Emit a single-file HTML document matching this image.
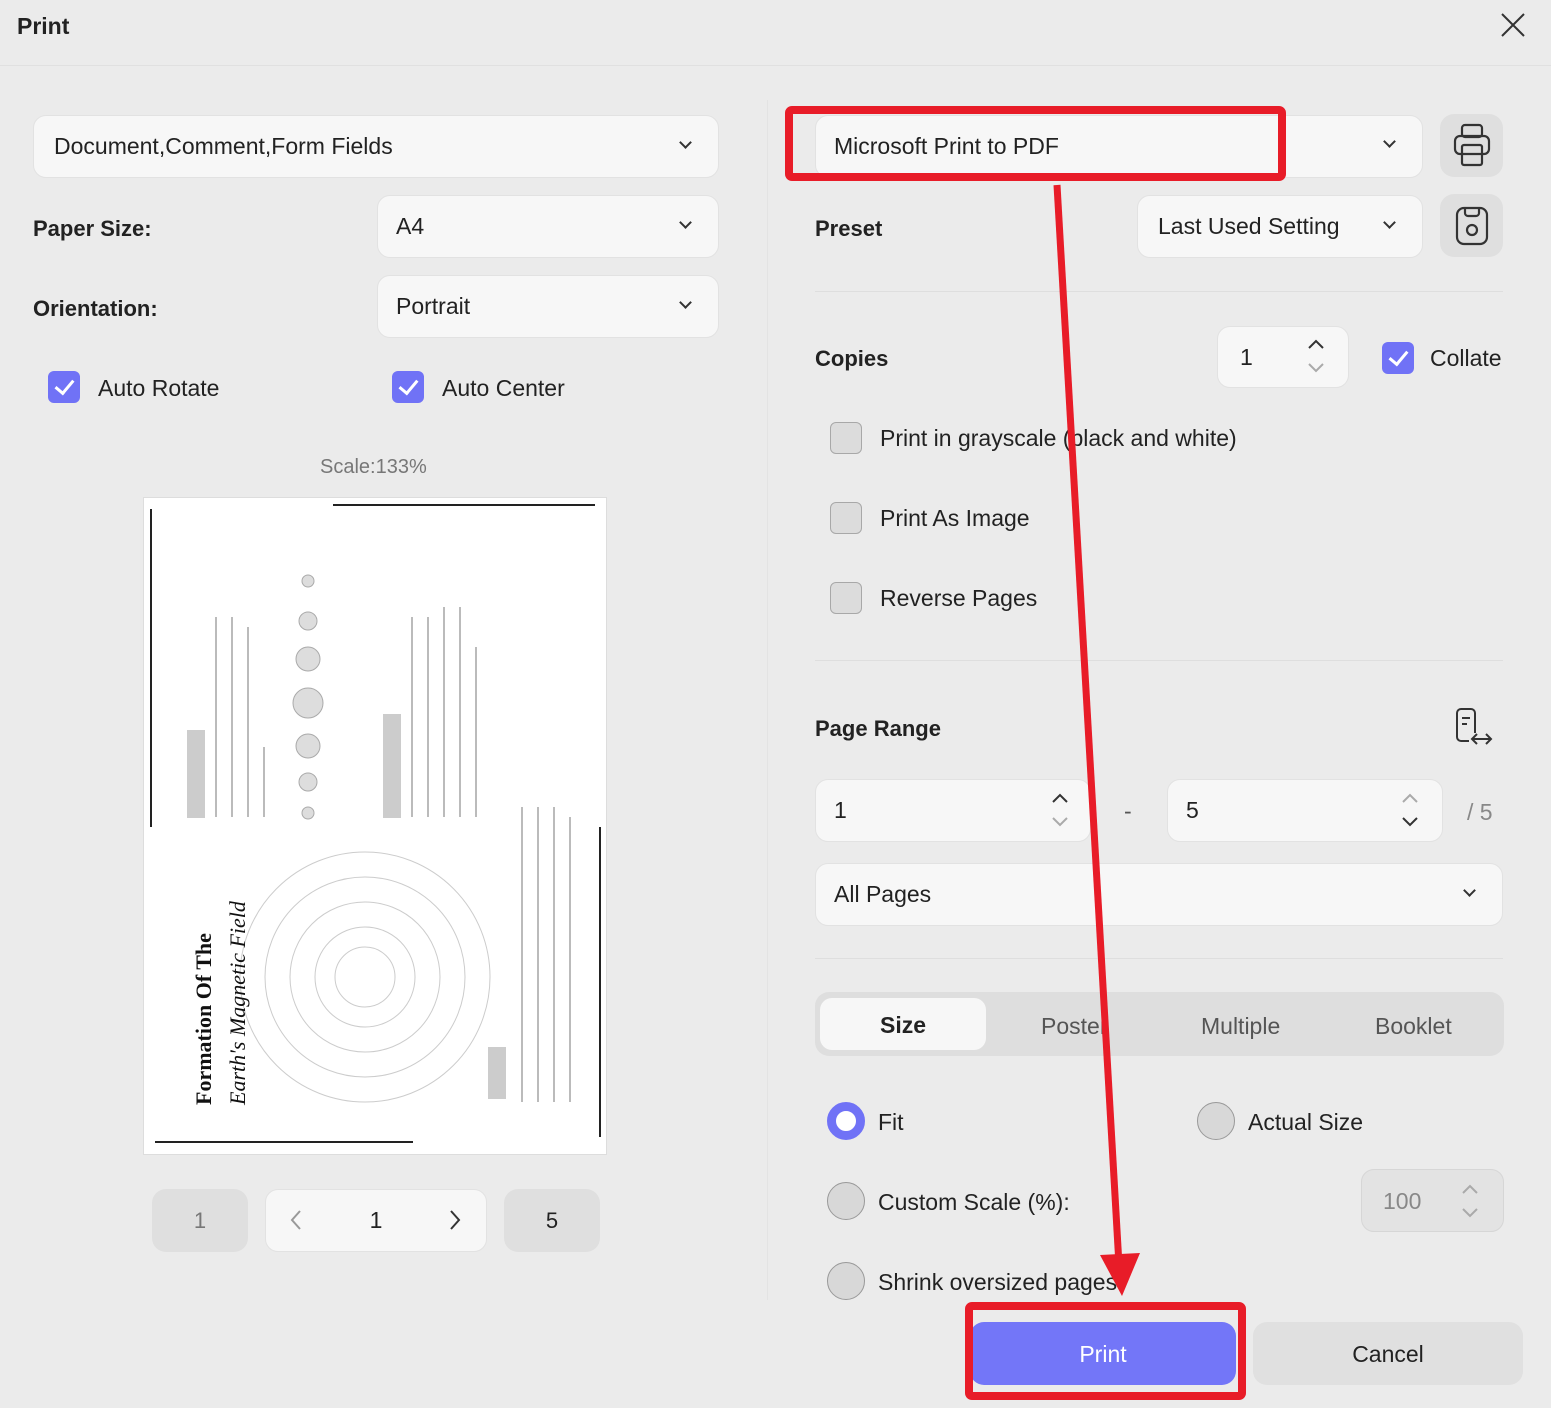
<!DOCTYPE html>
<html><head><meta charset="utf-8"><style>
*{box-sizing:border-box;margin:0;padding:0}
body{width:1551px;height:1408px;background:#ebebeb;font-family:"Liberation Sans",sans-serif;color:#222;position:relative;overflow:hidden}
.a{position:absolute}
.f{position:absolute;background:#f7f7f7;border:1.5px solid #e2e2e2;border-radius:13px;font-size:23px;display:flex;align-items:center;padding-left:18px}
.lbl{position:absolute;font-size:22px;font-weight:bold;color:#222}
.t{position:absolute;font-size:23px;color:#222}
.chev{position:absolute;width:9px;height:9px;border-right:2px solid #333;border-bottom:2px solid #333;transform:rotate(45deg)}
.cb{position:absolute;width:32px;height:32px;border-radius:6px;background:#7072f6}
.cb:after{content:"";position:absolute;left:11px;top:5px;width:8px;height:15px;border-right:3px solid #fff;border-bottom:3px solid #fff;transform:rotate(40deg)}
.uc{position:absolute;width:32px;height:32px;border-radius:6px;background:#dcdcdc;border:1.5px solid #a8a8a8}
.rd{position:absolute;width:38px;height:38px;border-radius:50%;background:#d8d8d8;border:1.5px solid #999}
.hl{position:absolute;height:1px;background:#dedede}
.ib{position:absolute;background:#dfdfdf;border-radius:14px}
</style></head><body>
<div class="a" style="left:17px;top:13px;font-size:23px;font-weight:bold">Print</div>
<svg class="a" style="left:1500px;top:12px" width="26" height="26"><path d="M2 2L24 24M24 2L2 24" stroke="#333" stroke-width="2"/></svg>
<div class="hl" style="left:0;top:65px;width:1551px;background:#e0e0e0"></div>
<div class="a" style="left:767px;top:100px;width:1px;height:1200px;background:#e3e3e3"></div>

<div class="f" style="left:33px;top:115px;width:686px;height:63px;padding-left:20px">Document,Comment,Form Fields</div><div class="chev" style="left:681px;top:138px"></div>
<div class="lbl" style="left:33px;top:216px">Paper Size:</div>
<div class="f" style="left:377px;top:195px;width:342px;height:63px">A4</div><div class="chev" style="left:681px;top:218px"></div>
<div class="lbl" style="left:33px;top:296px">Orientation:</div>
<div class="f" style="left:377px;top:275px;width:342px;height:63px">Portrait</div><div class="chev" style="left:681px;top:298px"></div>
<div class="cb" style="left:48px;top:371px"></div><div class="t" style="left:98px;top:375px">Auto Rotate</div>
<div class="cb" style="left:392px;top:371px"></div><div class="t" style="left:442px;top:375px">Auto Center</div>
<div class="a" style="left:320px;top:456px;font-size:20px;color:#777">Scale:133%</div>

<svg class="a" style="left:143px;top:497px" width="465" height="659">
<rect x="0.5" y="0.5" width="463" height="657" fill="#fff" stroke="#ddd"/>
<line x1="8" y1="12" x2="8" y2="330" stroke="#222" stroke-width="2"/>
<line x1="190" y1="8" x2="452" y2="8" stroke="#222" stroke-width="2"/>
<line x1="12" y1="645" x2="270" y2="645" stroke="#222" stroke-width="2"/>
<line x1="457" y1="330" x2="457" y2="640" stroke="#222" stroke-width="2"/>
<g fill="#ddd" stroke="#aaa"><circle cx="165" cy="84" r="6"/><circle cx="165" cy="124" r="9"/><circle cx="165" cy="162" r="12"/><circle cx="165" cy="206" r="15"/><circle cx="165" cy="249" r="12"/><circle cx="165" cy="285" r="9"/><circle cx="165" cy="316" r="6"/></g>
<rect x="44" y="233" width="18" height="88" fill="#ccc"/><rect x="240" y="217" width="18" height="104" fill="#ccc"/><rect x="345" y="550" width="18" height="52" fill="#ccc"/>
<g stroke="#ccc" fill="none"><circle cx="222" cy="480" r="30"/><circle cx="222" cy="480" r="50"/><circle cx="222" cy="480" r="75"/><circle cx="222" cy="480" r="100"/><circle cx="222" cy="480" r="125"/></g>
<g fill="#bbb"><rect x="72" y="120" width="2" height="200"/><rect x="88" y="120" width="2" height="200"/><rect x="104" y="130" width="2" height="190"/><rect x="120" y="250" width="2" height="70"/><rect x="268" y="120" width="2" height="200"/><rect x="284" y="120" width="2" height="200"/><rect x="300" y="110" width="2" height="210"/><rect x="316" y="110" width="2" height="210"/><rect x="332" y="150" width="2" height="170"/><rect x="378" y="310" width="2" height="295"/><rect x="394" y="310" width="2" height="295"/><rect x="410" y="310" width="2" height="295"/><rect x="426" y="320" width="2" height="285"/></g>
<text transform="translate(68,608) rotate(-90)" font-family="Liberation Serif" font-weight="bold" font-size="22" fill="#111">Formation Of The</text>
<text transform="translate(102,608) rotate(-90)" font-family="Liberation Serif" font-style="italic" font-size="22" fill="#111">Earth's Magnetic Field</text>
</svg>

<div class="ib" style="left:152px;top:1189px;width:96px;height:63px;font-size:22px;color:#777;text-align:center;line-height:63px">1</div>
<div class="f" style="left:265px;top:1189px;width:222px;height:63px;padding:0;justify-content:center">1</div>
<svg class="a" style="left:288px;top:1208px" width="180" height="24"><path d="M12 3L4 12L12 21" stroke="#999" stroke-width="2" fill="none"/><path d="M163 3L171 12L163 21" stroke="#333" stroke-width="2" fill="none"/></svg>
<div class="ib" style="left:504px;top:1189px;width:96px;height:63px;font-size:22px;text-align:center;line-height:63px">5</div>

<div class="f" style="left:815px;top:115px;width:608px;height:63px">Microsoft Print to PDF</div><div class="chev" style="left:1385px;top:137px"></div>
<div class="ib" style="left:1440px;top:114px;width:63px;height:63px"></div>
<svg class="a" style="left:1453px;top:123px" width="38" height="44" fill="none" stroke="#333" stroke-width="2.2"><rect x="9" y="2" width="20" height="12" rx="3"/><rect x="2" y="13" width="34" height="18" rx="5"/><rect x="9" y="22" width="20" height="20" rx="2"/></svg>
<div class="lbl" style="left:815px;top:216px">Preset</div>
<div class="f" style="left:1137px;top:195px;width:286px;height:63px;padding-left:20px">Last Used Setting</div><div class="chev" style="left:1385px;top:218px"></div>
<div class="ib" style="left:1440px;top:194px;width:63px;height:63px"></div>
<svg class="a" style="left:1454px;top:206px" width="36" height="40" fill="none" stroke="#333" stroke-width="2.2"><rect x="3" y="2" width="30" height="36" rx="7"/><path d="M11 2v5a3 3 0 0 0 3 3h8a3 3 0 0 0 3-3V2"/><circle cx="18" cy="24" r="5"/></svg>
<div class="hl" style="left:815px;top:291px;width:688px"></div>

<div class="lbl" style="left:815px;top:346px">Copies</div>
<div class="f" style="left:1217px;top:326px;width:132px;height:62px;padding-left:22px">1</div>
<svg class="a" style="left:1306px;top:338px" width="20" height="36" fill="none" stroke-width="2"><path d="M3 10L10 3L17 10" stroke="#333"/><path d="M3 26L10 33L17 26" stroke="#aaa"/></svg>
<div class="cb" style="left:1382px;top:342px"></div><div class="t" style="left:1430px;top:345px">Collate</div>
<div class="uc" style="left:830px;top:422px"></div><div class="t" style="left:880px;top:425px">Print in grayscale (black and white)</div>
<div class="uc" style="left:830px;top:502px"></div><div class="t" style="left:880px;top:505px">Print As Image</div>
<div class="uc" style="left:830px;top:582px"></div><div class="t" style="left:880px;top:585px">Reverse Pages</div>
<div class="hl" style="left:815px;top:660px;width:688px"></div>

<div class="lbl" style="left:815px;top:716px">Page Range</div>
<svg class="a" style="left:1455px;top:707px" width="38" height="40" fill="none" stroke="#333" stroke-width="2"><path d="M20 26V6a4 4 0 0 0-4-4H6a4 4 0 0 0-4 4v24a4 4 0 0 0 4 4h8"/><path d="M7 11h8M7 17h5"/><path d="M18 32h17M22 27l-5 5 5 5M31 27l5 5-5 5"/></svg>
<div class="f" style="left:815px;top:779px;width:276px;height:63px">1</div>
<svg class="a" style="left:1050px;top:792px" width="20" height="36" fill="none" stroke-width="2"><path d="M3 10L10 3L17 10" stroke="#333"/><path d="M3 26L10 33L17 26" stroke="#aaa"/></svg>
<div class="t" style="left:1124px;top:798px;color:#555">-</div>
<div class="f" style="left:1167px;top:779px;width:276px;height:63px">5</div>
<svg class="a" style="left:1400px;top:792px" width="20" height="36" fill="none" stroke-width="2"><path d="M3 10L10 3L17 10" stroke="#aaa"/><path d="M3 26L10 33L17 26" stroke="#333"/></svg>
<div class="t" style="left:1467px;top:799px;color:#888">/ 5</div>
<div class="f" style="left:815px;top:863px;width:688px;height:63px">All Pages</div><div class="chev" style="left:1465px;top:886px"></div>
<div class="hl" style="left:815px;top:958px;width:688px"></div>

<div class="a" style="left:815px;top:992px;width:689px;height:64px;background:#dedede;border-radius:14px"></div>
<div class="a" style="left:820px;top:998px;width:166px;height:52px;background:#f7f7f7;border-radius:12px;font-size:23px;font-weight:bold;text-align:center;line-height:54px">Size</div>
<div class="t" style="left:1041px;top:1013px;color:#555">Poster</div>
<div class="t" style="left:1201px;top:1013px;color:#555">Multiple</div>
<div class="t" style="left:1375px;top:1013px;color:#555">Booklet</div>

<div class="a" style="left:827px;top:1102px;width:38px;height:38px;border-radius:50%;background:#fff;border:9px solid #7072f6"></div>
<div class="t" style="left:878px;top:1109px">Fit</div>
<div class="rd" style="left:1197px;top:1102px"></div><div class="t" style="left:1248px;top:1109px">Actual Size</div>
<div class="rd" style="left:827px;top:1182px"></div><div class="t" style="left:878px;top:1189px">Custom Scale (%):</div>
<div class="a" style="left:1361px;top:1169px;width:143px;height:63px;background:#e3e3e3;border:1.5px solid #d6d6d6;border-radius:13px;font-size:23px;color:#888;padding:18px 0 0 21px">100</div>
<svg class="a" style="left:1460px;top:1183px" width="20" height="36" fill="none" stroke="#aaa" stroke-width="2"><path d="M3 10L10 3L17 10"/><path d="M3 26L10 33L17 26"/></svg>
<div class="rd" style="left:827px;top:1262px"></div><div class="t" style="left:878px;top:1269px">Shrink oversized pages</div>

<div class="a" style="left:970px;top:1322px;width:266px;height:63px;background:#7376f8;border-radius:14px;color:#fff;font-size:23px;text-align:center;line-height:65px">Print</div>
<div class="a" style="left:1253px;top:1322px;width:270px;height:63px;background:#e0e0e0;border-radius:14px;font-size:23px;text-align:center;line-height:65px">Cancel</div>

<svg class="a" style="left:0;top:0" width="1551" height="1408">
<rect x="789" y="110" width="493" height="67" fill="none" stroke="#e81c28" stroke-width="8" rx="3"/>
<rect x="969" y="1306" width="273" height="90" fill="none" stroke="#e81c28" stroke-width="8" rx="3"/>
<path d="M1057 185L1119 1265" stroke="#e81c28" stroke-width="7"/>
<path d="M1100 1255L1140 1253L1122 1296Z" fill="#e81c28"/>
</svg>
</body></html>
